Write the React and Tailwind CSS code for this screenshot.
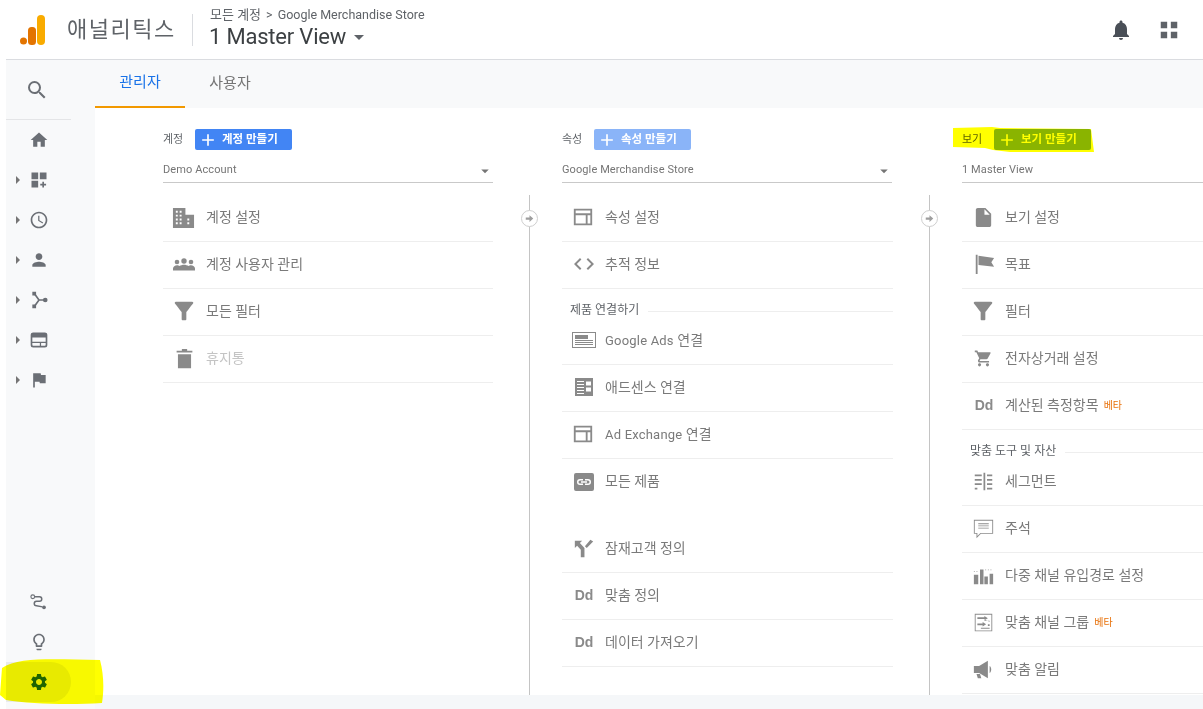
import React from 'react'
import {
  MdSearch, MdHome, MdAccessTime, MdPerson, MdFlag, MdSettings, MdNotifications,
  MdFilterAlt, MdInsertDriveFile, MdShoppingCart,
  MdCode, MdOutlineLightbulb, MdAdd, MdArrowDropDown,
} from 'react-icons/md'

// small drawn icons the packages don't have
const Svg = ({ children, className = 'w-6 h-6' }) => (
  <svg viewBox="0 0 24 24" className={className} fill="currentColor">{children}</svg>
)
const Dashboard = (p) => (
  <Svg {...p}><path d="M3 3h8v8H3zM13 3h8v8h-8zM3 13h8v8H3zM16 14h2v2.500h2.500v2H18V21h-2v-2.500h-2.500v-2H16z" /></Svg>
)
const Flow = (p) => (
  <Svg {...p}>
    <path d="M4 2h4.500v4.500H4zM4 17.500h4.500V22H4z" />
    <circle cx="19.500" cy="12" r="2.800" />
    <path d="M7 5l5 7-5 7M12 12h6" fill="none" stroke="currentColor" strokeWidth="2" />
  </Svg>
)
const Browser = (p) => (
  <Svg {...p}>
    <rect x="3" y="4" width="18" height="16" rx="2" fill="none" stroke="currentColor" strokeWidth="2" />
    <path d="M3 4h18v5H3zM3 14h18v1.500H3zM13 14h1.500v6H13z" />
  </Svg>
)
const Path = (p) => (
  <Svg {...p}>
    <circle cx="5" cy="5" r="2.500" fill="none" stroke="currentColor" strokeWidth="1.500" />
    <circle cx="20" cy="19" r="2.500" />
    <path d="M7.500 5H14a3 3 0 0 1 0 6h-4a3 3 0 0 0 0 6l8 1.500" fill="none" stroke="currentColor" strokeWidth="2" />
  </Svg>
)
const Grid4 = (p) => (
  <Svg {...p}><path d="M3 3h7v7H3zM14 3h7v7h-7zM3 14h7v7H3zM14 14h7v7h-7z" /></Svg>
)
const Building = (p) => (
  <Svg {...p}>
    <path fillRule="evenodd" d="M1 2h13v7h9v14H1zm3 3v2h2V5zm4 0v2h2V5zM4 9v2h2V9zm4 0v2h2V9zm-4 4v2h2v-2zm4 0v2h2v-2zm8 0v2h2v-2zm-12 4v2h2v-2zm4 0v2h2v-2zm8 0v2h2v-2z" />
  </Svg>
)
const Users = (p) => (
  <Svg {...p}>
    <circle cx="5" cy="10" r="2.300" />
    <circle cx="12" cy="9" r="2.700" />
    <circle cx="19" cy="10" r="2.300" />
    <path d="M1 18.500v-2c0-2 2-3.300 4-3.300 1 0 2 .3 2.500.8 1-.7 3-1.300 4.500-1.300s3.500.6 4.500 1.300c.5-.5 1.500-.8 2.500-.8 2 0 4 1.300 4 3.300v2z" />
  </Svg>
)
const Trash = (p) => (
  <Svg {...p}><path d="M9 1h6v2h6v2H3V3h6zM4.500 7h15v16h-15z" /></Svg>
)
const Frame = (p) => (
  <Svg {...p}><path fillRule="evenodd" d="M2 3h20v18H2zm2 2v3h16V5zm0 5v9h11v-9zm13 0v9h3v-9z" /></Svg>
)
const AdsCard = (p) => (
  <Svg {...p}><path fillRule="evenodd" d="M0 4h24v16H0zm1 1v14h22V5zM3 7h13v4H3zm0 5h18v1H3zm0 2h18v1H3zm0 2h18v1H3z" /></Svg>
)
const Adsense = (p) => (
  <Svg {...p}><path fillRule="evenodd" d="M3 3h18v18H3zm2 3v1h7V6zm0 3v1h7V9zm0 3v1h7v-1zm0 3v1h7v-1zm0 3v1h7v-1zm9-11.500v4h5v-4zm0 6v4h5v-4z" /></Svg>
)
const LinkBox = (p) => (
  <Svg {...p}>
    <path fillRule="evenodd" d="M4 3h16a2 2 0 0 1 2 2v14a2 2 0 0 1-2 2H4a2 2 0 0 1-2-2V5a2 2 0 0 1 2-2zm4 6a3 3 0 0 0 0 6h3v-1.500H8a1.500 1.500 0 0 1 0-3h3V9zm5 0v1.500h3a1.500 1.500 0 0 1 0 3h-3V15h3a3 3 0 0 0 0-6zm-4 2.300v1.400h6v-1.400z" />
  </Svg>
)
const Split = (p) => (
  <Svg {...p}><path d="M2 4h8L7.500 6.500l5 5.500V22h-4v-8L4.500 9.500 2 12zM22 5l-7 7-2-2 6-7z" /></Svg>
)
const Goal = (p) => (
  <Svg {...p}><path d="M3 2h2v21H3zM6 3l17 2.500-3 4.500 3 5L6 13z" /></Svg>
)
const Segment = (p) => (
  <Svg {...p}><path d="M12 2h2v20h-2zM2 4h8v2H2zM2 9h8v2H2zM2 14h8v2H2zM2 19h3v2H2zM16 4h6v2h-6zM16 9h6v2h-6zM16 14h6v2h-6zM16 19h6v2h-6z" /></Svg>
)
const Note = (p) => (
  <Svg {...p}><path fillRule="evenodd" d="M1 2h22v16H9l-5 5v-5H1zm1 1v14h3v3.500L8.500 17H22V3zm4 3h12v1H6zm0 2.500h12v1H6zm0 2.500h12v1H6z" /></Svg>
)
const Bars = (p) => (
  <Svg {...p}><path d="M1 11h5v11H1zM8 5h4v17H8zM13 13h4v9h-4zM19 10h4v12h-4zM1 7h1v1H1zm3 0h1v1H4zm10-2h1v1h-1zm3 0h1v1h-1zm3 0h1v1h-1z" /></Svg>
)
const Channels = (p) => (
  <Svg {...p}><path fillRule="evenodd" d="M2 2h20v20H2zm1 1v18h18V3zm2 3h8V4.500L17 7l-4 2.500V8H5zm14 4h-6V8.500L19 11zM5 13h6v-1.500L15 14l-4 2.500V15H5zm14 1v2h-2v-2zM9 18h10v1H9z" /></Svg>
)
const Megaphone = (p) => (
  <Svg {...p}><path d="M1 8h6v8H1zM7 8l10-6v20L7 16zM19 8c2.500 1.500 2.500 6.500 0 8zM4 17h4l1.500 5h-4z" /></Svg>
)
const Dd = () => <span className="text-[14px] font-bold text-[#8a8a8a] font-['Liberation_Sans',sans-serif] leading-none">Dd</span>

const Beta = () => <span className="ml-[5px] text-[10px] text-[#e8710a]">베타</span>

const sideTop = [
  { icon: <MdHome className="w-5 h-5" /> },
  { icon: <Dashboard className="w-5 h-5" />, arrow: true },
  { icon: <MdAccessTime className="w-5 h-5" />, arrow: true },
  { icon: <MdPerson className="w-5 h-5" />, arrow: true },
  { icon: <Flow className="w-5 h-5" />, arrow: true },
  { icon: <Browser className="w-5 h-5" />, arrow: true },
  { icon: <MdFlag className="w-5 h-5" />, arrow: true },
]

const col1 = [
  { icon: <Building className="w-[23px] h-[23px] mr-[3px]" />, label: '계정 설정' },
  { icon: <Users className="w-[24px] h-[24px] mr-[2px]" />, label: '계정 사용자 관리' },
  { icon: <MdFilterAlt className="w-7 h-7 mr-[2px]" />, label: '모든 필터' },
  { icon: <Trash className="w-[21px] h-[21px] mr-[1px]" />, label: '휴지통', muted: true },
]
const col2a = [
  { icon: <Frame className="w-[22px] h-[22px] mr-[2px]" />, label: '속성 설정' },
  { icon: <MdCode className="w-6 h-6 mr-[1px]" />, label: '추적 정보' },
]
const col2b = [
  { icon: <AdsCard className="w-6 h-6" />, latin: 'Google Ads', label: ' 연결' },
  { icon: <Adsense className="w-6 h-6" />, label: '애드센스 연결' },
  { icon: <Frame className="w-[22px] h-[22px] mr-[2px]" />, latin: 'Ad Exchange', label: ' 연결' },
  { icon: <LinkBox className="w-6 h-6" />, label: '모든 제품', noLine: true },
]
const col2c = [
  { icon: <Split className="w-[22px] h-[22px]" />, label: '잠재고객 정의' },
  { icon: <Dd />, label: '맞춤 정의' },
  { icon: <Dd />, label: '데이터 가져오기' },
]
const col3a = [
  { icon: <MdInsertDriveFile className="w-[23px] h-[23px] mr-[1px]" />, label: '보기 설정' },
  { icon: <Goal className="w-[22px] h-[22px]" />, label: '목표' },
  { icon: <MdFilterAlt className="w-7 h-7 mr-[2px]" />, label: '필터' },
  { icon: <MdShoppingCart className="w-[19px] h-[19px] mr-[2px]" />, label: '전자상거래 설정' },
  { icon: <Dd />, label: '계산된 측정항목', beta: true },
]
const col3b = [
  { icon: <Segment className="w-[21px] h-[21px] mr-[2px]" />, label: '세그먼트' },
  { icon: <Note className="w-[21px] h-[21px] mr-[2px]" />, label: '주석' },
  { icon: <Bars className="w-[21px] h-[21px] mr-[2px]" />, label: '다중 채널 유입경로 설정' },
  { icon: <Channels className="w-[21px] h-[21px] mr-[2px]" />, label: '맞춤 채널 그룹', beta: true },
  { icon: <Megaphone className="w-[21px] h-[21px] mr-[2px]" />, label: '맞춤 알림' },
]

const Row = ({ item }) => (
  <div className={`h-[47px] flex items-center pl-px pb-[2px] ${item.noLine ? '' : 'border-b border-[#eeeeee]'}`}>
    <div className="w-[42px] flex justify-center text-[#8a8a8a]">{item.icon}</div>
    <span className={`text-[14px] whitespace-pre ${item.muted ? 'text-[#c4c4c4]' : 'text-[#7a7a7a]'}`}>
      {item.latin && <span className="text-[13px] tracking-[0.2px]">{item.latin}</span>}
      {item.label}
    </span>
    {item.beta && <Beta />}
  </div>
)

const SectionLabel = ({ children }) => (
  <div className="h-[29px] flex items-end gap-[9px] pl-[8px]">
    <span className="text-[12px] leading-[15px] text-[#5f6368] whitespace-nowrap">{children}</span>
    <div className="flex-1 border-t border-[#eeeeee] mb-[6px]" />
  </div>
)

const ColumnHead = ({ label, button, btnClass, value, caret }) => (
  <div className="w-[330px]">
    <div className="h-[21px] flex items-center">
      <span className="w-[32px] pt-[1px] text-[11px] text-[#5f6368]">{label}</span>
      <button className={`h-[21px] w-[97px] rounded-[2px] flex items-center pl-[3px] text-white text-[11.500px] font-bold ${btnClass}`}>
        <MdAdd className="w-5 h-5 mr-[4px]" />
        {button}
      </button>
    </div>
    <div className="h-[33px] flex items-end justify-between pb-[4px] border-b border-[#c9c9c9]">
      <span className="text-[11px] tracking-[0.1px] text-[#757575]">{value}</span>
      {caret && <MdArrowDropDown className="w-[18px] h-[18px] text-[#757575] mr-[-1px] mb-[-2px]" />}
    </div>
  </div>
)

const Connector = () => (
  <div className="relative ml-[36px] mr-[32px] mt-[12px] border-l border-[#c4c4c4]">
    <div className="absolute left-[-9px] top-[15px] w-[17px] h-[17px] rounded-full border border-[#cfcfcf] bg-white flex items-center justify-center">
      <svg viewBox="0 0 12 12" className="w-[9px] h-[9px] text-[#9e9e9e]" fill="currentColor">
        <path d="M1 4.500h5V1.500L11 6l-5 4.500v-3H1z" />
      </svg>
    </div>
  </div>
)

const Column = ({ head, width, connector, children }) => (
  <div className="flex flex-col shrink-0">
    <ColumnHead {...head} />
    <div className="flex-1 flex min-h-0">
      <div className={`${width} pt-[12px]`}>{children}</div>
      {connector && <Connector />}
    </div>
  </div>
)

export default function App() {
  return (
    <div className="relative w-[1203px] h-[709px] overflow-hidden bg-white font-[Roboto,'Noto_Sans_CJK_KR',sans-serif]">
      {/* top bar */}
      <header className="h-[60px] ml-[6px] flex items-center border-b border-[#dadce0] bg-white">
        <svg viewBox="0 0 30 32" className="ml-[13px] w-[30px] h-[32px] shrink-0">
          <rect x="18" y="1" width="8" height="30" rx="4" fill="#f9ab00" />
          <rect x="9" y="13" width="8" height="18" rx="3.500" fill="#e37400" />
          <circle cx="4.500" cy="27" r="3.500" fill="#e37400" />
        </svg>
        <span className="ml-[18px] w-[125px] text-[22px] text-[#5f6368] tracking-[1.500px] whitespace-nowrap">애널리틱스</span>
        <div className="h-[32px] border-l border-[#dadce0]" />
        <div className="ml-[17px] mt-[-2px]">
          <div className="text-[12.500px] leading-[16px] text-[#5f6368] flex items-center">
            <span className="text-[13px]">모든 계정</span>
            <span className="mx-[5px]">&gt;</span>
            Google Merchandise Store
          </div>
          <div className="flex items-center text-[22px] tracking-[-0.2px] leading-[28px] text-[#3c4043] ml-[-1px]">
            1 Master View
            <MdArrowDropDown className="w-6 h-6 ml-[1px] text-[#5f6368]" />
          </div>
        </div>
        <div className="ml-auto flex items-center text-[#5f6368]">
          <MdNotifications className="w-6 h-6 text-[#4a4f57] mr-[25px]" />
          <Grid4 className="w-[22px] h-[22px] mr-[23px]" />
        </div>
      </header>

      <div className="flex h-[649px] ml-[6px]">
        {/* left nav */}
        <aside className="w-[89px] shrink-0 bg-[#f8f9fa] flex flex-col text-[#6b6f75]">
          <div className="h-[60px] w-[65px] flex items-center pt-[1px] pl-[19px] border-b border-[#e4e5e7]">
            <MdSearch className="w-[24px] h-[24px]" />
          </div>
          <nav>
            {sideTop.map((item, i) => (
              <div key={i} className="h-10 flex items-center pl-[10px]">
                <span className={`w-0 h-0 border-y-[4px] border-y-transparent border-l-[4px] ${item.arrow ? 'border-l-[#757575]' : 'border-l-transparent'}`} />
                <div className="ml-[9px] w-5 flex justify-center">{item.icon}</div>
              </div>
            ))}
          </nav>
          <div className="mt-auto mb-[7px]">
            <div className="h-10 w-[65px] flex items-center pl-[23px]"><Path className="w-[18px] h-[18px]" /></div>
            <div className="h-10 w-[65px] flex items-center pl-[23px]"><MdOutlineLightbulb className="w-[20px] h-[20px]" /></div>
            <div className="h-10 w-[65px] flex items-center pl-[23px] bg-[#e8eaed] rounded-r-full">
              <MdSettings className="w-[20px] h-[20px] text-[#1f6400]" />
            </div>
          </div>
        </aside>

        <div className="flex-1 min-w-0 flex flex-col bg-[#f5f7f9]">
          {/* tabs */}
          <div className="h-[48px] shrink-0 flex bg-[#f8f9fa]">
            <div className="w-[90px] flex items-center justify-center pb-[2px] text-[15px] text-[#1a73e8] border-b-2 border-[#f29900]">관리자</div>
            <div className="w-[90px] flex items-center justify-center pb-[2px] text-[15px] text-[#757575]">사용자</div>
          </div>

          {/* three admin columns */}
          <main className="h-[587px] bg-white overflow-hidden flex pt-[21px] pl-[68px]">
            <Column width="w-[330px]" connector head={{ label: '계정', button: '계정 만들기', btnClass: 'bg-[#4285f4]', value: 'Demo Account', caret: true }}>
              {col1.map((r) => <Row key={r.label} item={r} />)}
            </Column>
            <Column width="w-[331px]" connector head={{ label: '속성', button: '속성 만들기', btnClass: 'bg-[#8ab4f8]', value: 'Google Merchandise Store', caret: true }}>
              {col2a.map((r) => <Row key={r.label} item={r} />)}
              <SectionLabel>제품 연결하기</SectionLabel>
              {col2b.map((r) => <Row key={r.label + r.latin} item={r} />)}
              <div className="h-[20px]" />
              {col2c.map((r) => <Row key={r.label} item={r} />)}
            </Column>
            <Column width="w-[330px]" head={{ label: '보기', button: '보기 만들기', btnClass: 'bg-[#8ab4f8]', value: '1 Master View' }}>
              {col3a.map((r) => <Row key={r.label} item={r} />)}
              <SectionLabel>맞춤 도구 및 자산</SectionLabel>
              {col3b.map((r) => <Row key={r.label} item={r} />)}
            </Column>
          </main>
        </div>
      </div>

      {/* yellow highlighter marks over the shot */}
      <svg className="absolute inset-0 w-[1203px] h-[709px] pointer-events-none mix-blend-multiply" viewBox="0 0 1203 709">
        <path fill="#ffff00" d="M2 668 C20 656 60 660 100 660 C104 675 104 690 102 703 C70 705 30 704 6 700 L0 695 Z" />
        <path fill="#ffff00" d="M953 128 L992 127 L1000 128 L1091 129 L1094 152 L1010 152 L993 150 L985 148 L953 147 Z" />
      </svg>
    </div>
  )
}
